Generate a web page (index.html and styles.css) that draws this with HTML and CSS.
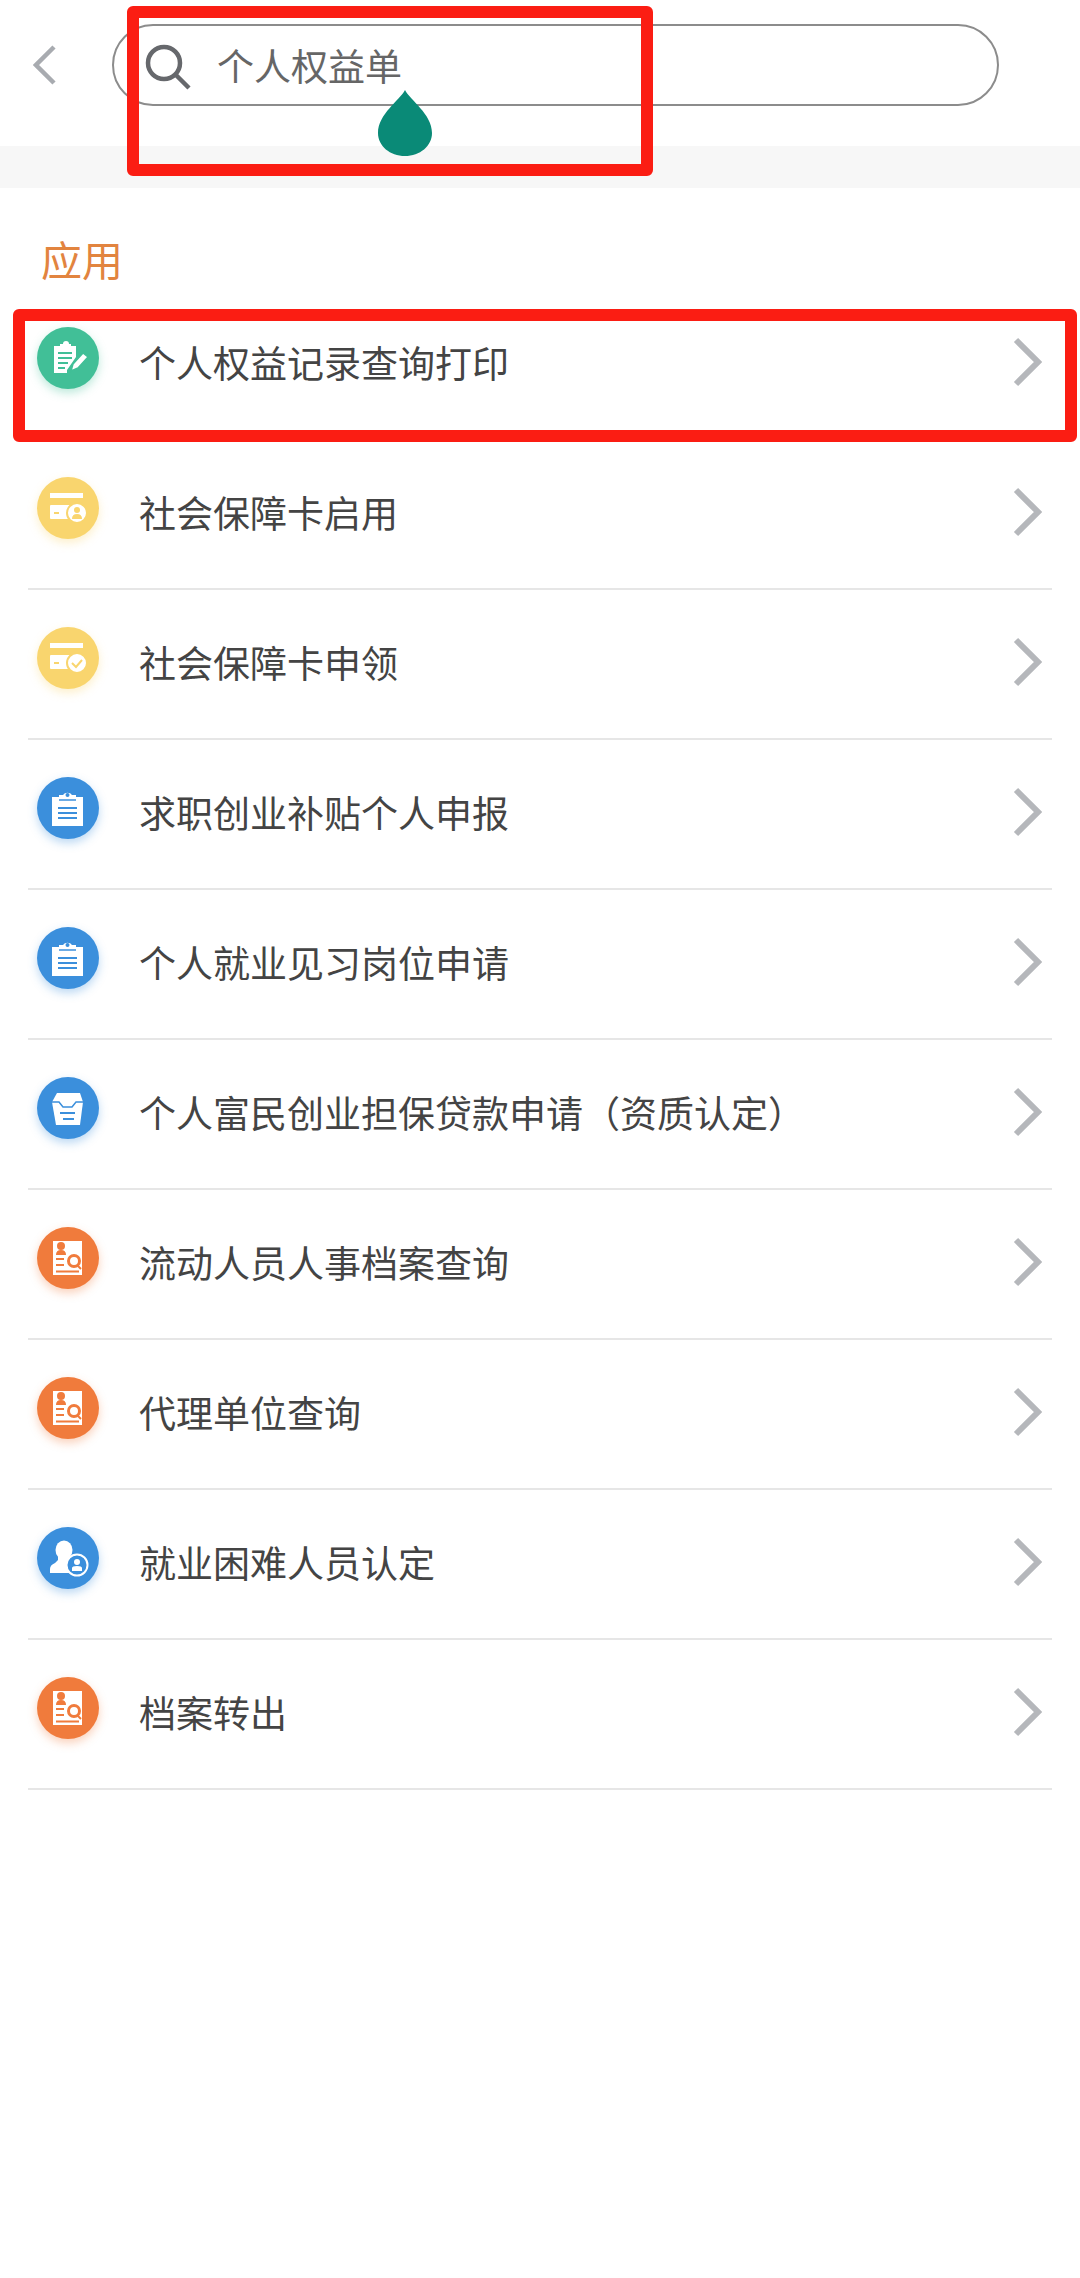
FILE: index.html
```html
<!DOCTYPE html>
<html lang="zh-CN">
<head>
    <meta charset="UTF-8">
    <meta name="viewport" content="width=device-width, initial-scale=1.0">
    <title>个人权益单</title>
    <link rel="stylesheet" href="styles.css">
</head>
<body>
    <svg class="defs" width="0" height="0">
        <symbol id="chev" viewBox="0 0 30 50">
            <path d="M4 3 L26 25 L4 47" fill="none" stroke="currentColor" stroke-width="6"/>
        </symbol>
        <symbol id="i-edit" viewBox="0 0 62 62">
            <path d="M17 19 H23 V17 H26 A3 3 0 0 1 32 17 H34 V19 H39 V30 L30 43 V46 H17 Z" fill="#fff"/>
            <path d="M21 26 H35 M21 31 H35 M21 36 H31 M21 41 H28" stroke="#41bf97" stroke-width="2"/>
            <path d="M34 44 L36 37 L46 26 L51 30 L41 41 Z" fill="#fff" stroke="#41bf97" stroke-width="1.5"/>
        </symbol>
        <symbol id="i-card-user" viewBox="0 0 62 62">
            <rect x="13" y="16" width="33" height="5" fill="#fff"/>
            <rect x="13" y="28" width="20" height="14" rx="1" fill="#fff"/>
            <path d="M17 36 H22" stroke="#f9d56e" stroke-width="2"/>
            <circle cx="40" cy="36" r="10" fill="#fff" stroke="#f9d56e" stroke-width="2"/>
            <circle cx="40" cy="33" r="3" fill="#f9d56e"/>
            <path d="M35 42 Q35 37 40 37 Q45 37 45 42 Z" fill="#f9d56e"/>
        </symbol>
        <symbol id="i-card-check" viewBox="0 0 62 62">
            <rect x="13" y="16" width="33" height="5" fill="#fff"/>
            <rect x="13" y="28" width="20" height="14" rx="1" fill="#fff"/>
            <path d="M17 36 H22" stroke="#f9d56e" stroke-width="2"/>
            <circle cx="40" cy="36" r="10" fill="#fff" stroke="#f9d56e" stroke-width="2"/>
            <path d="M35 36 L39 40 L45 33" fill="none" stroke="#f9d56e" stroke-width="2"/>
        </symbol>
        <symbol id="i-clip" viewBox="0 0 62 62">
            <path d="M15 20 H22 V18 H26 A5 4 0 0 1 35 18 H39 V20 H46 V49 H15 Z" fill="#fff"/>
            <circle cx="30.500" cy="18" r="2" fill="#3b8fdc"/>
            <path d="M22 23 H39" stroke="#3b8fdc" stroke-width="1.500"/>
            <path d="M21 31 H40 M21 36 H40 M21 41 H40" stroke="#3b8fdc" stroke-width="2"/>
        </symbol>
        <symbol id="i-tray" viewBox="0 0 62 62">
            <path d="M20 16 H43 L46 25 L43 48 H19 L15 25 Z" fill="#fff"/>
            <path d="M15 25 H22 L26 30 H35 L39 25 H46" fill="none" stroke="#3b8fdc" stroke-width="1.500"/>
            <path d="M23 36 H38 M26 42 H37" stroke="#3b8fdc" stroke-width="2"/>
        </symbol>
        <symbol id="i-file" viewBox="0 0 62 62">
            <rect x="16" y="14" width="29" height="34" fill="#fff"/>
            <circle cx="24" cy="19" r="4" fill="#f07b3c"/>
            <path d="M19 28 Q19 23 24 23 Q29 23 29 28 Z" fill="#f07b3c"/>
            <path d="M19 32 H27 M19 38 H27 M19 44.500 H42" stroke="#f07b3c" stroke-width="2"/>
            <circle cx="37" cy="34" r="5.500" fill="none" stroke="#f07b3c" stroke-width="3"/>
            <path d="M40 38 L44 42" stroke="#f07b3c" stroke-width="2"/>
        </symbol>
        <symbol id="i-person" viewBox="0 0 62 62">
            <ellipse cx="27" cy="23" rx="8.500" ry="9.500" fill="#fff"/>
            <path d="M21 30 H33 V33 L38 38 V46 H13 V42 Q13 38 18 36 L21 33 Z" fill="#fff"/>
            <circle cx="40" cy="38" r="10.500" fill="#3b8fdc" stroke="#fff" stroke-width="2"/>
            <circle cx="40" cy="35" r="3" fill="#fff"/>
            <path d="M35 44 V41 Q35 39 40 39 Q45 39 45 41 V44 Z" fill="#fff"/>
        </symbol>
    </svg>

    <header class="topbar">
        <svg class="back" viewBox="0 0 24 40"><path d="M21 2 L3 20 L21 38" fill="none" stroke="currentColor" stroke-width="4.500"/></svg>
        <div class="search">
            <svg class="search-icon" viewBox="0 0 46 46">
                <circle cx="19" cy="19" r="16" fill="none" stroke="#66686c" stroke-width="4.500"/>
                <path d="M31 31 L44 44" stroke="#66686c" stroke-width="4.500"/>
            </svg>
            <span class="search-text">个人权益单</span>
        </div>
    </header>
    <div class="band"></div>

    <h2 class="section-title">应用</h2>

    <ul class="list">
        <li class="row">
            <svg class="icon green"><use href="#i-edit"/></svg>
            <span class="label">个人权益记录查询打印</span>
            <svg class="chev"><use href="#chev"/></svg>
        </li>
        <li class="row">
            <svg class="icon yellow"><use href="#i-card-user"/></svg>
            <span class="label">社会保障卡启用</span>
            <svg class="chev"><use href="#chev"/></svg>
        </li>
        <li class="row">
            <svg class="icon yellow"><use href="#i-card-check"/></svg>
            <span class="label">社会保障卡申领</span>
            <svg class="chev"><use href="#chev"/></svg>
        </li>
        <li class="row">
            <svg class="icon blue"><use href="#i-clip"/></svg>
            <span class="label">求职创业补贴个人申报</span>
            <svg class="chev"><use href="#chev"/></svg>
        </li>
        <li class="row">
            <svg class="icon blue"><use href="#i-clip"/></svg>
            <span class="label">个人就业见习岗位申请</span>
            <svg class="chev"><use href="#chev"/></svg>
        </li>
        <li class="row">
            <svg class="icon blue"><use href="#i-tray"/></svg>
            <span class="label">个人富民创业担保贷款申请（资质认定）</span>
            <svg class="chev"><use href="#chev"/></svg>
        </li>
        <li class="row">
            <svg class="icon orange"><use href="#i-file"/></svg>
            <span class="label">流动人员人事档案查询</span>
            <svg class="chev"><use href="#chev"/></svg>
        </li>
        <li class="row">
            <svg class="icon orange"><use href="#i-file"/></svg>
            <span class="label">代理单位查询</span>
            <svg class="chev"><use href="#chev"/></svg>
        </li>
        <li class="row">
            <svg class="icon blue"><use href="#i-person"/></svg>
            <span class="label">就业困难人员认定</span>
            <svg class="chev"><use href="#chev"/></svg>
        </li>
        <li class="row">
            <svg class="icon orange"><use href="#i-file"/></svg>
            <span class="label">档案转出</span>
            <svg class="chev"><use href="#chev"/></svg>
        </li>
    </ul>

    <!-- annotations drawn over the screenshot -->
    <div class="mark mark-search"></div>
    <div class="mark mark-row"></div>
    <svg class="drop" viewBox="0 0 54 66"><path d="M27 0 C32 10 54 24 54 43 C54 56 42 66 27 66 C12 66 0 56 0 43 C0 24 22 10 27 0 Z" fill="#0a8a77"/></svg>
</body>
</html>
```

FILE: styles.css
```css
* {
    box-sizing: border-box;
}
body {
    position: relative;
    margin: 0;
    height: 2278px;
    background: #fff;
    font-family: "Noto Sans CJK SC", "Noto Sans", sans-serif;
    color: #444;
    overflow: hidden;
}
.defs {
    position: absolute;
}
.topbar {
    display: flex;
    align-items: flex-start;
    height: 146px;
    padding: 24px 0 0 33px;
}
.back {
    width: 24px;
    height: 40px;
    margin-top: 21px;
    color: #a8abb0;
}
.search {
    display: flex;
    align-items: center;
    width: 887px;
    height: 82px;
    margin-left: 55px;
    padding-left: 31px;
    border: 2px solid #8c8c8c;
    border-radius: 41px;
}
.search-icon {
    width: 46px;
    height: 46px;
    margin-top: 3px;
}
.search-text {
    margin-left: 26px;
    font-size: 37px;
    line-height: 50px;
    color: #666;
}
.band {
    height: 42px;
    background: #f7f7f7;
}
.section-title {
    height: 102px;
    margin: 0;
    padding: 0 0 0 41px;
    font-size: 41px;
    font-weight: 400;
    line-height: 140px;
    color: #e2843f;
}
.list {
    margin: 0 28px;
    padding: 0;
    list-style: none;
}
.row {
    display: flex;
    align-items: flex-start;
    height: 150px;
    padding: 37px 10px 0 9px;
    border-bottom: 2px solid #e6e6e6;
}
.icon {
    flex: none;
    width: 62px;
    height: 62px;
    border-radius: 50%;
}
.green {
    background: #41bf97;
    box-shadow: 0 4px 10px rgba(65, 191, 151, 0.35);
}
.yellow {
    background: #f9d56e;
    box-shadow: 0 4px 10px rgba(249, 213, 110, 0.35);
}
.blue {
    background: #3b8fdc;
    box-shadow: 0 4px 10px rgba(59, 143, 220, 0.35);
}
.orange {
    background: #f07b3c;
    box-shadow: 0 4px 10px rgba(240, 123, 60, 0.35);
}
.label {
    flex: 1;
    margin: 10px 0 0 40px;
    font-size: 37px;
    line-height: 50px;
    white-space: nowrap;
}
.chev {
    flex: none;
    width: 30px;
    height: 50px;
    margin-top: 10px;
    color: #b5b7bb;
}
.mark {
    position: absolute;
    border: 12px solid #fb1d13;
    border-radius: 6px;
}
.mark-search {
    left: 127px;
    top: 6px;
    width: 526px;
    height: 170px;
}
.mark-row {
    left: 13px;
    top: 309px;
    width: 1064px;
    height: 133px;
}
.drop {
    position: absolute;
    left: 378px;
    top: 90px;
    width: 54px;
    height: 66px;
}
```
